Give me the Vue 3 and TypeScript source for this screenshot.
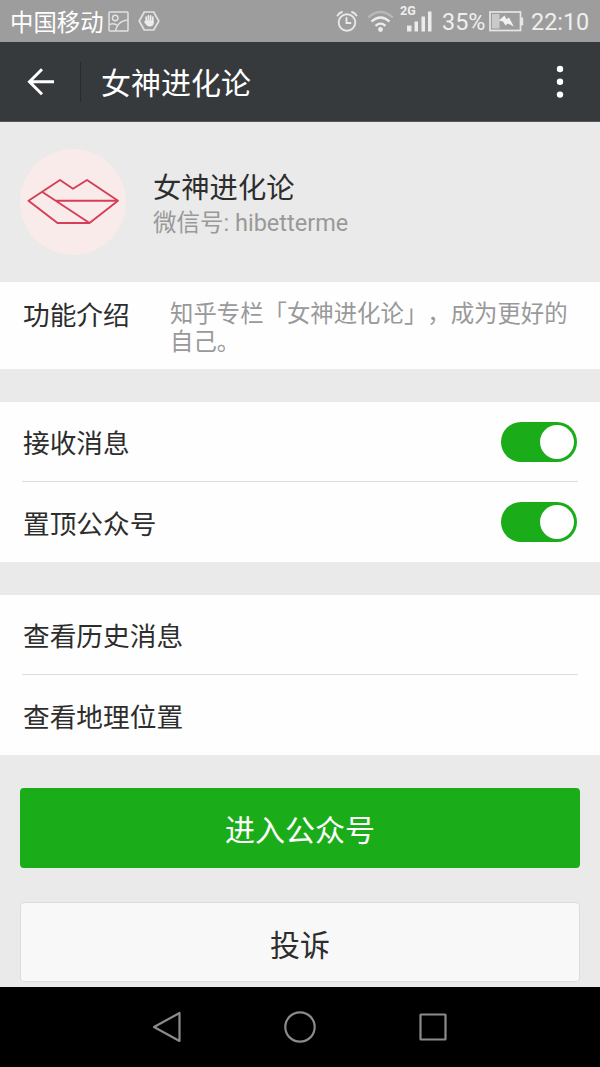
<script setup lang="ts">
import { ref } from 'vue'

interface Toggle {
  label: string
  on: boolean
}

const accountName = '女神进化论'
const toggles = ref<Toggle[]>([
  { label: '接收消息', on: true },
  { label: '置顶公众号', on: true },
])
const links: string[] = ['查看历史消息', '查看地理位置']
</script>

<template>
  <div class="screen">
    <div class="status">
      <span class="carrier">中国移动</span>
      <svg class="s-pic" width="21" height="21" viewBox="0 0 21 21" fill="none" stroke="#e2e2e2" stroke-width="1.5">
        <rect x="1" y="1" width="19" height="19" rx="0.8" />
        <circle cx="7.2" cy="7" r="2.7" />
        <path d="M7.5 19.5C8.500 14.500 12.500 9.500 19.500 9M1.500 13.500Q6 11.500 9.500 14.500" />
      </svg>
      <svg class="s-hand" width="22" height="20" viewBox="0 0 22 20">
        <path d="M6.300 1H15.700L20.800 10L15.700 19H6.300L1.200 10Z" fill="none" stroke="#e2e2e2" stroke-width="1.700" stroke-linejoin="round" />
        <path d="M8.200 6.200V11M10.400 4.900V11M12.600 4.900V11M14.800 6.200V12" stroke="#ececec" stroke-width="1.700" stroke-linecap="round" />
        <path d="M7.400 9.500H15.600V12.500C15.600 14.500 14 15.500 12 15.500S9 15 6 11L6.600 10.300Z" fill="#ececec" />
      </svg>
      <span class="grow"></span>
      <svg class="s-alarm" width="22" height="23" viewBox="0 0 22 23" fill="none" stroke="#e8e8e8" stroke-width="1.900" stroke-linecap="round">
        <circle cx="11" cy="12.500" r="8.300" />
        <path d="M10.500 8V13H14.500M1.500 5.500Q3 3 6 2M20.500 5.500Q19 3 16 2" />
      </svg>
      <svg class="s-wifi" width="27" height="23" viewBox="0 0 27 23" fill="none" stroke-width="2.300">
        <path d="M1.200 7.500Q13.500 -3.500 25.800 7.500" stroke="#b8b8b8" />
        <path d="M4.500 11.500Q13.500 3.500 22.500 11.500M8.500 15.800Q13.500 11.500 18.500 15.800" stroke="#ececec" />
        <circle cx="13.500" cy="19.500" r="2.400" fill="#ececec" />
      </svg>
      <div class="signal">
        <span class="net">2G</span>
        <svg width="26" height="21" viewBox="0 0 26 21" fill="#ececec">
          <rect x="0" y="14.500" width="4.500" height="6" />
          <rect x="7.500" y="10.500" width="3.500" height="10" />
          <rect x="14.500" y="5.500" width="3.500" height="15" />
          <rect x="21" y="0.500" width="3.500" height="20" />
        </svg>
      </div>
      <span class="pct">35%</span>
      <svg class="s-bat" width="35" height="21" viewBox="0 0 35 21">
        <rect x="1" y="1" width="30.500" height="18.500" fill="none" stroke="#e6e6e6" stroke-width="1.700" />
        <rect x="32" y="6.500" width="2.200" height="8" fill="#e6e6e6" />
        <rect x="3" y="3" width="7.500" height="14.500" fill="#c9c9c9" />
        <path d="M9.800 9.500L15.500 4.500L17.500 8.200L20 6.500L24.800 15.500L18.800 12.500L16.500 14.500L14 10.500Z" fill="#f2f2f2" />
      </svg>
      <span class="time">22:10</span>
    </div>

    <header class="bar">
      <svg class="back" width="28" height="28" viewBox="0 0 28 28" fill="none" stroke="#fff" stroke-width="3">
        <path d="M27 13.700H2.500M15 1.200L2.500 13.700L15 26.200" />
      </svg>
      <span class="sep"></span>
      <h1>{{ accountName }}</h1>
      <svg class="more" width="8" height="34" viewBox="0 0 8 34" fill="#fff">
        <circle cx="4" cy="4" r="3.200" />
        <circle cx="4" cy="16.800" r="3.200" />
        <circle cx="4" cy="29.600" r="3.200" />
      </svg>
    </header>

    <section class="profile">
      <svg class="avatar" width="106" height="106" viewBox="0 0 106 106">
        <circle cx="53" cy="53" r="53" fill="#f8ebe9" />
        <g fill="none" stroke="#d63e58" stroke-width="1.900" stroke-linejoin="round">
          <path d="M8.500 51.700L40 31L53 39.700L67 31L98 51.700L69.500 74H37.500Z" />
          <path d="M22 42.700L69.500 74M36 51.700H98" />
        </g>
      </svg>
      <div class="who">
        <div class="name">{{ accountName }}</div>
        <div class="wxid">微信号: hibetterme</div>
      </div>
    </section>

    <section class="group intro">
      <div class="label">功能介绍</div>
      <p>知乎专栏「女神进化论」，成为更好的自己。</p>
    </section>

    <section class="group">
      <div v-for="t in toggles" :key="t.label" class="row" @click="t.on = !t.on">
        <span>{{ t.label }}</span>
        <span class="switch" :class="{ on: t.on }"><i></i></span>
      </div>
    </section>

    <section class="group">
      <div v-for="l in links" :key="l" class="row">
        <span>{{ l }}</span>
      </div>
    </section>

    <button class="btn primary">进入公众号</button>
    <button class="btn plain">投诉</button>

    <nav class="nav">
      <svg width="30" height="32" viewBox="0 0 30 32"><path d="M27.500 2V30L2 16Z" /></svg>
      <svg width="32" height="32" viewBox="0 0 32 32"><circle cx="16" cy="16" r="14.700" /></svg>
      <svg width="30" height="32" viewBox="0 0 30 32"><rect x="2.500" y="3.500" width="25" height="25" rx="0.500" /></svg>
    </nav>
  </div>
</template>

<style>
body {
  margin: 0;
  background: #eaeaea;
}
</style>

<style scoped>
* {
  box-sizing: border-box;
}
.screen {
  width: 600px;
  height: 1067px;
  overflow: hidden;
  display: flex;
  flex-direction: column;
  background: #eaeaea;
  color: #2d2d2d;
  font-family: Roboto, "Noto Sans CJK SC", sans-serif;
  white-space: nowrap;
  text-spacing-trim: space-all;
}
.screen > * {
  flex-shrink: 0;
}
.status {
  height: 42px;
  display: flex;
  align-items: center;
  padding: 0 10px;
  background: #9d9d9d;
  color: #efefef;
  font-size: 23.400px;
  line-height: 38px;
}
.carrier {
  color: #fff;
  width: 94px;
  padding-top: 3px;
}
.s-pic {
  margin-left: 4px;
}
.s-hand {
  margin-left: 9px;
}
.grow {
  flex: 1;
}
.s-alarm {
  margin-right: 9px;
}
.s-wifi {
  margin-right: 6px;
}
.signal {
  position: relative;
  width: 35px;
  height: 42px;
  padding: 11px 0 0 7px;
  line-height: 0;
}
.net {
  position: absolute;
  left: 0;
  top: 4px;
  font-size: 12.500px;
  font-weight: 700;
  line-height: 14px;
}
.pct {
  margin-left: 7px;
  width: 45px;
  padding-top: 2px;
}
.s-bat {
  margin-left: 2px;
}
.time {
  margin-left: 7px;
  width: 59px;
  padding-top: 2px;
}
.bar {
  height: 80px;
  display: flex;
  align-items: center;
  padding: 0 36px 0 27px;
  background: #373a3d;
  border-bottom: 1px solid #56595b;
}
.sep {
  width: 1px;
  height: 40px;
  margin-left: 25px;
  background: #292c2e;
}
h1 {
  flex: 1;
  margin: 0 0 0 20px;
  padding-top: 5px;
  font-size: 30px;
  font-weight: 400;
  line-height: 40px;
  color: #fff;
}
.profile {
  height: 160px;
  display: flex;
  padding: 27px 20px 0;
}
.who {
  margin: 21px 0 0 27px;
}
.name {
  font-size: 28.300px;
  line-height: 38px;
}
.wxid {
  font-size: 23.500px;
  line-height: 31px;
  color: #999;
}
.group {
  margin-bottom: 33px;
  padding: 0 22px;
  background: #fefefe;
}
.intro {
  height: 87px;
  display: flex;
  padding-top: 17px;
}
.label,
.row {
  font-size: 26.700px;
}
.label {
  width: 147px;
  padding-left: 1px;
  line-height: 34px;
}
.intro p {
  width: 405px;
  margin: 1px 0 0;
  padding-left: 1px;
  font-size: 23.400px;
  line-height: 28px;
  color: #999;
  white-space: normal;
}
.row {
  height: 80px;
  display: flex;
  align-items: center;
  justify-content: space-between;
}
.row > span:first-child {
  padding-left: 1px;
}
.row:first-child {
  border-bottom: 1px solid #dcdcdc;
}
.switch {
  width: 76px;
  height: 40px;
  padding: 3px;
  margin-right: 1px;
  display: flex;
  border-radius: 20px;
  background: #ccc;
}
.switch.on {
  justify-content: flex-end;
  background: #1aad19;
}
.switch i {
  width: 34px;
  height: 34px;
  border-radius: 50%;
  background: #fff;
}
.btn {
  height: 80px;
  margin: 0 20px;
  padding: 6px 0 0;
  border: 0;
  border-radius: 4px;
  font-family: inherit;
  font-size: 30px;
  line-height: 74px;
}
.primary {
  background: #1aad19;
  color: #fff;
}
.plain {
  margin-top: 34px;
  background: #f8f8f8;
  border: 1px solid #dcdcdc;
  color: #2d2d2d;
}
.nav {
  height: 80px;
  margin-top: auto;
  display: flex;
  align-items: center;
  justify-content: center;
  gap: 102px;
  background: #000;
}
.nav svg {
  fill: none;
  stroke: #8b8b8b;
  stroke-width: 2.200;
  stroke-linejoin: round;
}
</style>
